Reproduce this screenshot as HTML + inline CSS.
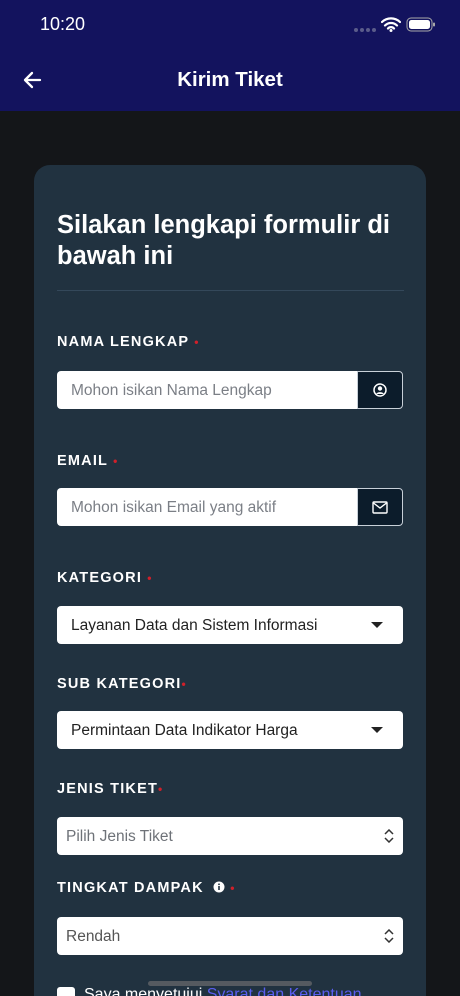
<!DOCTYPE html>
<html style="width:460px;height:996px;overflow:hidden"><head><meta charset="utf-8"><style>
*{margin:0;padding:0;box-sizing:border-box}
body{width:460px;height:996px;overflow:hidden;background:#141619;font-family:"Liberation Sans",sans-serif;position:relative;color:#fff}
.hdr{position:absolute;left:0;top:0;width:460px;height:111px;background:#13135e}
.time{position:absolute;left:40px;top:14px;font-size:18px;font-weight:500}
.title{position:absolute;left:0;width:460px;top:68px;text-align:center;font-size:20.5px;font-weight:bold}
.card{position:absolute;left:34px;top:165px;width:392px;height:831px;background:#213240;border-radius:16px 16px 0 0}
h1{position:absolute;left:57px;top:210px;font-size:25.5px;line-height:31px;font-weight:bold;width:360px}
.div{position:absolute;left:57px;top:290px;width:347px;height:1px;background:#34485a}
.lbl{position:absolute;left:57px;font-size:14.5px;font-weight:bold;letter-spacing:1.2px}
.lbl b{color:#d0202a;font-size:12px;letter-spacing:0}
.in{position:absolute;left:57px;width:346px;height:38px;background:#fff;border-radius:4px;color:#7b7f86;font-size:15.5px;padding-left:14px;line-height:39px}
.ib{position:absolute;left:357px;width:46px;height:38px;background:#0c1c2b;border:1px solid #c8d0d8;border-radius:0 4px 4px 0}
.sel{position:absolute;left:57px;width:346px;height:38px;background:#fff;border-radius:4px;font-size:15.5px;line-height:39px;padding-left:14px;color:#222}
.tri{position:absolute;right:20px;top:16px;border-left:6px solid transparent;border-right:6px solid transparent;border-top:6px solid #222}
.ud{position:absolute;right:8px;top:12px}
</style></head><body>
<div class="hdr">
<div class="time">10:20</div>
<svg style="position:absolute;left:354px;top:27px" width="22" height="6"><g fill="#5a5c8a"><circle cx="2" cy="3" r="2"/><circle cx="8" cy="3" r="2"/><circle cx="14" cy="3" r="2"/><circle cx="20" cy="3" r="2"/></g></svg>
<svg style="position:absolute;left:381px;top:17px" width="20" height="15" viewBox="0 0 20 15"><path d="M1 5a13 13 0 0 1 18 0M4 8.5a8.5 8.5 0 0 1 12 0M7 11.5a4 4 0 0 1 6 0" stroke="#fff" stroke-width="2.2" fill="none" stroke-linecap="round"/><circle cx="10" cy="13.5" r="1.5" fill="#fff"/></svg>
<svg style="position:absolute;left:406px;top:17px" width="30" height="16"><rect x="1" y="1" width="25" height="13" rx="4" fill="none" stroke="#aaa" stroke-width="1"/><rect x="3" y="3" width="21" height="9" rx="2.5" fill="#fff"/><rect x="27" y="5.5" width="2" height="4" rx="1" fill="#aaa"/></svg>
<svg style="position:absolute;left:22px;top:70px" width="20" height="20" viewBox="0 0 20 20"><path d="M18 10H3M10 3L3 10l7 7" stroke="#fff" stroke-width="2.3" fill="none" stroke-linecap="round" stroke-linejoin="round"/></svg>
<div class="title">Kirim Tiket</div>
</div>
<div class="card"></div>
<h1>Silakan lengkapi formulir di bawah ini</h1>
<div class="div"></div>

<div class="lbl" style="top:334px">NAMA LENGKAP <b>•</b></div>
<div class="in" style="top:371px;width:300px;border-radius:4px 0 0 4px">Mohon isikan Nama Lengkap</div>
<div class="ib" style="top:371px"><svg style="position:absolute;left:15px;top:11px" width="14" height="14" viewBox="0 0 14 14"><circle cx="7" cy="7" r="6" fill="none" stroke="#fff" stroke-width="1.5"/><circle cx="7" cy="5.5" r="2.2" fill="#fff"/><path d="M3 11a4.5 3.5 0 0 1 8 0" fill="#fff"/></svg></div>

<div class="lbl" style="top:453px">EMAIL <b>•</b></div>
<div class="in" style="top:488px;width:300px;border-radius:4px 0 0 4px">Mohon isikan Email yang aktif</div>
<div class="ib" style="top:488px"><svg style="position:absolute;left:14px;top:12px" width="16" height="13" viewBox="0 0 16 13"><rect x="1" y="1" width="14" height="11" rx="1" fill="none" stroke="#fff" stroke-width="1.4"/><path d="M1.5 2l6.5 5 6.5-5" fill="none" stroke="#fff" stroke-width="1.4"/></svg></div>

<div class="lbl" style="top:570px">KATEGORI <b>•</b></div>
<div class="sel" style="top:606px">Layanan Data dan Sistem Informasi<div class="tri"></div></div>

<div class="lbl" style="top:676px">SUB KATEGORI<b>•</b></div>
<div class="sel" style="top:711px">Permintaan Data Indikator Harga<div class="tri"></div></div>

<div class="lbl" style="top:781px">JENIS TIKET<b>•</b></div>
<div class="sel" style="top:817px;padding-left:9px;color:#6e7278">Pilih Jenis Tiket<svg class="ud" width="12" height="14" viewBox="0 0 12 14"><path d="M2 5l4-4 4 4M2 9l4 4 4-4" fill="none" stroke="#333" stroke-width="1.5"/></svg></div>

<div class="lbl" style="top:880px">TINGKAT DAMPAK <svg width="12" height="12" style="vertical-align:-1px;margin-left:4px"><circle cx="6" cy="6" r="5.5" fill="#fff"/><rect x="5.2" y="5" width="1.6" height="4" fill="#213240"/><circle cx="6" cy="3.3" r="0.9" fill="#213240"/></svg> <b>•</b></div>
<div class="sel" style="top:917px;padding-left:9px;color:#555">Rendah<svg class="ud" width="12" height="14" viewBox="0 0 12 14"><path d="M2 5l4-4 4 4M2 9l4 4 4-4" fill="none" stroke="#333" stroke-width="1.5"/></svg></div>

<div style="position:absolute;left:57px;top:987px;width:18px;height:18px;background:#fff;border-radius:3px"></div>
<div style="position:absolute;left:84px;top:986px;font-size:16px;color:#fff">Saya menyetujui <span style="color:#5a5ef0">Syarat dan Ketentuan</span></div>
<div style="position:absolute;left:148px;top:981px;width:164px;height:5px;border-radius:3px;background:#555a60"></div>
</body></html>
